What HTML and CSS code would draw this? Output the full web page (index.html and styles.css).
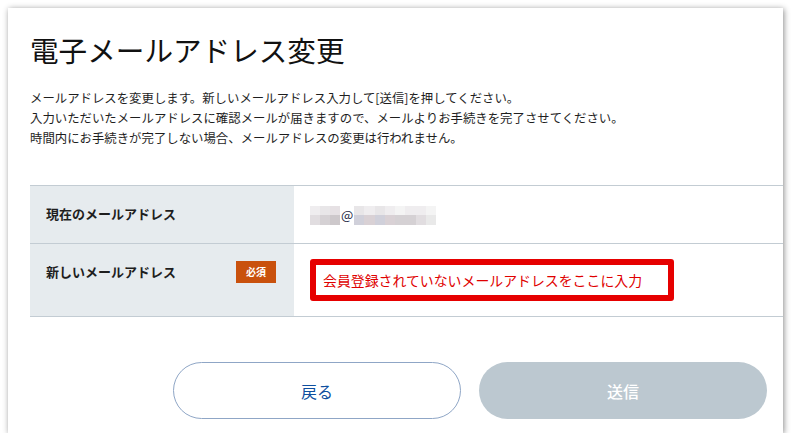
FILE: index.html
```html
<!DOCTYPE html>
<html lang="ja">
<head>
  <meta charset="UTF-8" />
  <meta name="viewport" content="width=device-width, initial-scale=1.0">
  <title>電子メールアドレス変更</title>
  <link rel="stylesheet" href="styles.css">
</head>
<body>
  <div class="card">
    <h1 class="title">電子メールアドレス変更</h1>
    <p class="lead">
      メールアドレスを変更します。新しいメールアドレス入力して[送信]を押してください。<br>
      入力いただいたメールアドレスに確認メールが届きますので、メールよりお手続きを完了させてください。<br>
      時間内にお手続きが完了しない場合、メールアドレスの変更は行われません。
    </p>

    <div class="form">
      <div class="row">
        <div class="label">現在のメールアドレス</div>
        <div class="value">
          <span class="mosaic">
            <span class="m a"></span><span class="m b"></span><span class="m c"></span>
            <span class="m d"></span><span class="m e"></span><span class="m f"></span>
          </span><span class="at">@</span><span class="mosaic wide">
            <span class="m b"></span><span class="m a"></span><span class="m b"></span><span class="m a"></span><span class="m g"></span><span class="m a"></span><span class="m a"></span><span class="m g"></span>
            <span class="m h"></span><span class="m i"></span><span class="m h"></span><span class="m i"></span><span class="m e"></span><span class="m e"></span><span class="m d"></span><span class="m j"></span>
          </span>
        </div>
      </div>
      <div class="row">
        <div class="label">
          新しいメールアドレス
          <span class="badge">必須</span>
        </div>
        <div class="value">
          <div class="notice">会員登録されていないメールアドレスをここに入力</div>
        </div>
      </div>
    </div>

    <div class="actions">
      <button class="btn btn-back">戻る</button>
      <button class="btn btn-send" disabled>送信</button>
    </div>
  </div>
</body>
</html>
```

FILE: styles.css
```css
body {
  margin: 0;
  background: #fff;
  font-family: "Noto Sans CJK JP", "Noto Sans", sans-serif;
  color: #1e1e1e;
}

.card {
  margin: 8px 0 0 8px;
  width: 775px;
  height: 425px;
  box-sizing: border-box;
  padding: 22px 0 14px 22px;
  background: #fff;
  box-shadow: 1px 1px 6px rgba(0, 0, 0, 0.45);
}

.title {
  margin: 0;
  font-size: 28.6px;
  font-weight: 400;
  line-height: 40px;
  color: #111;
}

.lead {
  margin: 18px 0 0;
  font-size: 12.4px;
  line-height: 20px;
}

.form {
  margin-top: 37px;
  border-top: 1px solid #c3ccd3;
}

.row {
  display: grid;
  grid-template-columns: 264px 1fr;
  border-bottom: 1px solid #c3ccd3;
}

.label {
  display: flex;
  justify-content: space-between;
  align-items: flex-start;
  padding: 15px 18px 15px 16px;
  background: #e6ebee;
  font-size: 13px;
  font-weight: 700;
  line-height: 26px;
}

.badge {
  margin-top: 2px;
  width: 40px;
  height: 22px;
  background: #c9510d;
  color: #fff;
  font-size: 10px;
  font-weight: 700;
  line-height: 22px;
  text-align: center;
}

.value {
  padding: 15px 16px 15px 16px;
  font-size: 13px;
  line-height: 26px;
}

.mosaic {
  display: inline-grid;
  grid-template-columns: repeat(3, 10px);
  vertical-align: middle;
}

.mosaic.wide {
  grid-template-columns: repeat(8, 10.25px);
}

.m { height: 9.5px; }
.m.a { background: #efedef; }
.m.b { background: #e8e6e8; }
.m.c { background: #e6e1e4; }
.m.d { background: #e1dde0; }
.m.e { background: #d5d1d4; }
.m.f { background: #cdc8cb; }
.m.g { background: #f4f4f4; }
.m.h { background: #d0d0da; }
.m.i { background: #d9d1d5; }
.m.j { background: #e9e9e9; }

.at {
  display: inline-block;
  width: 12px;
  margin: 0 1px;
  vertical-align: middle;
  color: #1d2a45;
}

.notice {
  width: 364px;
  height: 42px;
  box-sizing: border-box;
  border: 6px solid #e60000;
  border-radius: 3px;
  padding-left: 7px;
  color: #e00000;
  font-size: 13.9px;
  line-height: 30px;
}

.actions {
  display: flex;
  justify-content: flex-end;
  gap: 18px;
  margin-top: 45px;
  padding-right: 16px;
}

.btn {
  width: 288px;
  height: 57px;
  border-radius: 29px;
  font-family: inherit;
  font-size: 16px;
  cursor: pointer;
}

.btn-back {
  background: #fff;
  border: 1px solid #8fa6c6;
  color: #0e4f9f;
}

.btn-send {
  background: #bcc8d0;
  border: none;
  color: #fff;
  font-weight: 500;
}
```
